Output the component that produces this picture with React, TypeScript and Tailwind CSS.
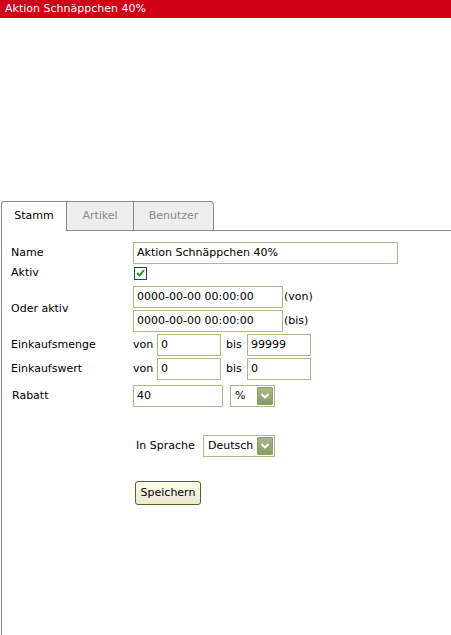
import React from "react";

const font = { fontFamily: '"DejaVu Sans", Verdana, sans-serif' };

function TextBox({ value, w, h = "h-[22px]" }: { value: string; w: string; h?: string }) {
  return (
    <div
      className={`${w} ${h} border border-[#a9bb86] bg-white flex items-center pl-[3px] text-[11px] text-black overflow-hidden whitespace-nowrap`}
    >
      {value}
    </div>
  );
}

function Chevron() {
  return (
    <svg width="10" height="8" viewBox="0 0 10 8">
      <path d="M1.5 2 L5 5.5 L8.5 2" fill="none" stroke="#ffffff" strokeWidth="2" />
    </svg>
  );
}

function SelectBox({ value, w }: { value: string; w: string }) {
  return (
    <div className={`${w} h-[22px] border border-[#a9bb86] bg-white flex items-center justify-between pl-[4px] pr-[1px]`}>
      <span className="text-[11px] text-black">{value}</span>
      <div className="w-[16px] h-[18px] rounded-[1px] border border-[#8ea06a] bg-gradient-to-b from-[#a7b98a] to-[#879c63] flex items-center justify-center">
        <Chevron />
      </div>
    </div>
  );
}

export default function App() {
  return (
    <div className="w-[451px] h-[635px] bg-white overflow-hidden text-[11px] text-black" style={font}>
      {/* title bar */}
      <div className="h-[18px] bg-[#cf0018] text-white text-[11px] leading-[18px] pl-[5px]">
        Aktion Schnäppchen 40%
      </div>

      {/* tabs */}
      <div className="mt-[183px] ml-[1px] flex h-[30px]">
        <div className="w-[66px] h-[30px] border-l border-t border-r border-[#8a8a8a] rounded-tl-[3px] bg-white flex items-center justify-center text-black">
          Stamm
        </div>
        <div className="w-[67px] h-[30px] border-t border-r border-b border-[#8a8a8a] bg-[#eeeeee] flex items-center justify-center text-[#8a8a8a]">
          Artikel
        </div>
        <div className="w-[80px] h-[30px] border-t border-r border-b border-[#8a8a8a] rounded-tr-[4px] bg-[#eeeeee] flex items-center justify-center text-[#8a8a8a]">
          Benutzer
        </div>
        <div className="flex-1 h-[30px] border-b border-[#8a8a8a]" />
      </div>

      {/* panel */}
      <div className="ml-[1px] h-[420px] border-l border-[#8a8a8a] pl-[9px] flex flex-col">
        <div className="mt-[11px] flex items-center h-[22px]">
          <div className="w-[122px]">Name</div>
          <TextBox value="Aktion Schnäppchen 40%" w="w-[265px]" />
        </div>

        <div className="mt-[1px] flex items-center h-[16px]">
          <div className="w-[122px]">Aktiv</div>
          <div className="ml-[1px] w-[13px] h-[13px] border border-[#1c4478] bg-white flex items-center justify-center">
            <svg width="9" height="8" viewBox="0 0 9 8">
              <path d="M1 4 L3.5 6.5 L8 1.2" fill="none" stroke="#23a02a" strokeWidth="2" />
            </svg>
          </div>
        </div>

        <div className="mt-[5px] flex items-center">
          <div className="w-[122px]">Oder aktiv</div>
          <div className="flex flex-col gap-[2px]">
            <div className="flex items-center">
              <TextBox value="0000-00-00 00:00:00" w="w-[150px]" />
              <span className="ml-[1px]">(von)</span>
            </div>
            <div className="flex items-center">
              <TextBox value="0000-00-00 00:00:00" w="w-[150px]" />
              <span className="ml-[1px]">(bis)</span>
            </div>
          </div>
        </div>

        <div className="mt-[2px] flex items-center h-[22px]">
          <div className="w-[122px]">Einkaufsmenge</div>
          <div className="w-[24px]">von</div>
          <TextBox value="0" w="w-[64px]" />
          <div className="w-[26px] pl-[5px]">bis</div>
          <TextBox value="99999" w="w-[64px]" />
        </div>

        <div className="mt-[2px] flex items-center h-[22px]">
          <div className="w-[122px]">Einkaufswert</div>
          <div className="w-[24px]">von</div>
          <TextBox value="0" w="w-[64px]" />
          <div className="w-[26px] pl-[5px]">bis</div>
          <TextBox value="0" w="w-[64px]" />
        </div>

        <div className="mt-[5px] flex items-center h-[22px]">
          <div className="w-[122px] pl-[1px]">Rabatt</div>
          <TextBox value="40" w="w-[90px]" />
          <div className="ml-[7px]">
            <SelectBox value="%" w="w-[45px]" />
          </div>
        </div>

        <div className="mt-[28px] flex items-center h-[22px]">
          <div className="ml-[125px] w-[67px]">In Sprache</div>
          <SelectBox value="Deutsch" w="w-[72px]" />
        </div>

        <div className="mt-[24px] flex">
          <button className="ml-[124px] w-[66px] h-[24px] border border-[#4b6a14] rounded-[3px] bg-gradient-to-b from-[#fffdf6] to-[#ede7d1] text-[11px] text-black" style={font}>
            Speichern
          </button>
        </div>
      </div>
    </div>
  );
}
